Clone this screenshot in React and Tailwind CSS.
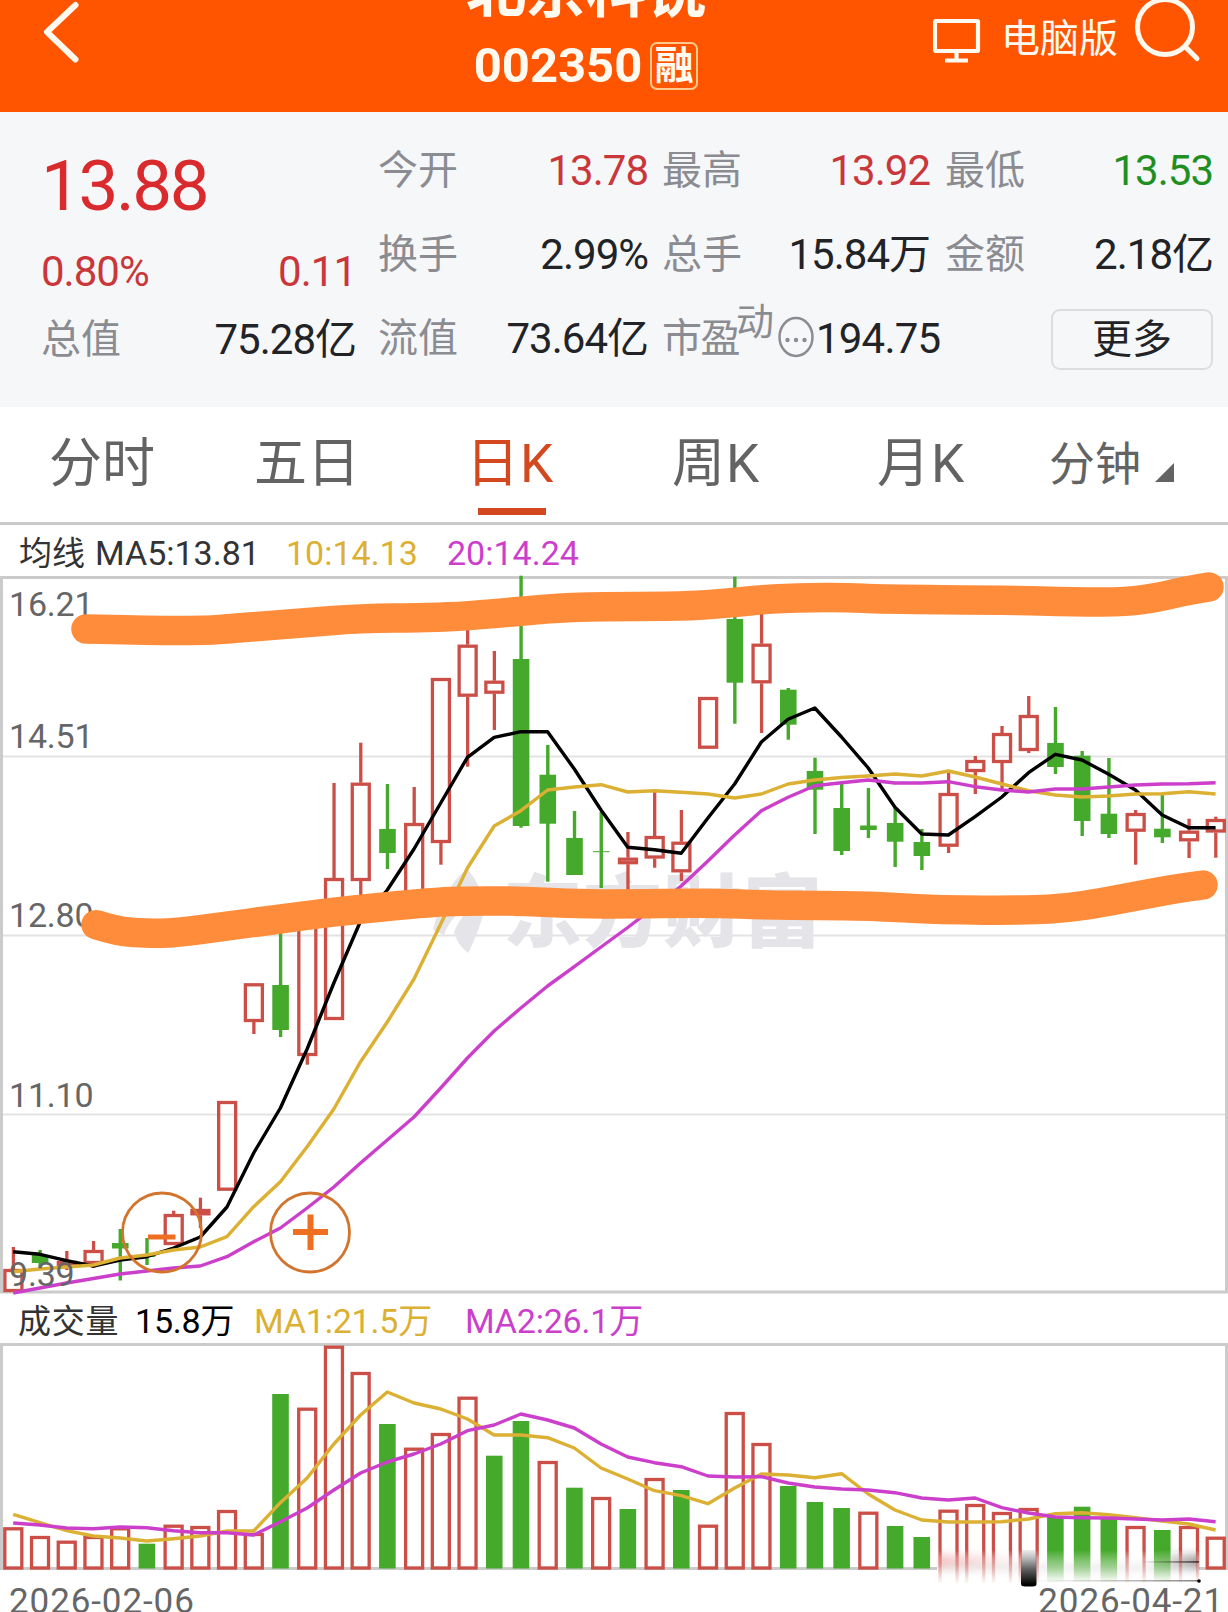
const RED = "#cb4e47";
const GREEN = "#45a92b";
const YELLOW = "#dcb032";
const PURPLE = "#cb3fcb";

const STEP = 26.72;
const xAt = (i) => 13.2 + STEP * i;

// [direction, high, bodyTop, bodyBottom, low]
const candles = [
  ["up", 1247, 1269, 1292, 1292],
  ["down", 1250, 1255, 1263, 1268],
  ["up", 1251, 1261, 1267, 1270],
  ["up", 1241, 1250, 1264, 1268],
  ["down", 1229, 1243, 1248.5, 1280.5],
  ["down", 1238, 1255, 1257, 1265],
  ["up", 1210.7, 1214, 1245, 1245],
  ["up", 1197.7, 1209, 1215.3, 1228],
  ["up", 1101, 1101, 1190.7, 1190.7],
  ["up", 983.3, 983.3, 1022, 1034],
  ["down", 925, 985, 1030, 1037],
  ["up", 918, 918, 1056, 1064.7],
  ["up", 783, 878, 1020, 1020],
  ["up", 742.7, 782.7, 881, 900],
  ["down", 784, 829, 853, 869],
  ["up", 787, 823, 900, 900],
  ["up", 678, 678, 843, 864.7],
  ["up", 620, 644.7, 696.7, 766.7],
  ["up", 651, 680.7, 693.7, 730],
  ["down", 575.7, 659, 826, 827.7],
  ["down", 745, 774.7, 823.7, 881.7],
  ["down", 811, 838, 875, 875],
  ["down", 812, 851.2, 852.2, 888],
  ["up", 832, 857.7, 864.2, 895],
  ["up", 790.7, 836, 858.5, 867.7],
  ["up", 810, 841.7, 872.3, 881],
  ["up", 697, 697, 748.7, 748.7],
  ["down", 576.7, 619, 682.7, 723.7],
  ["up", 605, 643.7, 683.3, 733],
  ["down", 688, 689.7, 724.7, 739.7],
  ["down", 757.7, 771, 789.7, 834],
  ["down", 784, 808, 851, 855],
  ["down", 788, 825.5, 830, 838],
  ["down", 808, 823, 841.7, 867],
  ["down", 829, 842, 856, 870],
  ["up", 772.7, 793, 846.7, 853],
  ["up", 756, 760, 772, 794],
  ["up", 726, 733, 763, 790],
  ["up", 696, 715, 751, 753],
  ["down", 707, 743, 767, 774],
  ["down", 751, 755.7, 821, 836],
  ["down", 758, 813.7, 834, 838],
  ["up", 810, 813, 831.7, 864.7],
  ["down", 795, 828.7, 837.3, 843],
  ["up", 818.7, 830.7, 841.3, 858],
  ["up", 816.7, 819, 832.5, 857.7],
];

const ma5 = [
  1251.7, 1254.3, 1260.7, 1266, 1260, 1256.7, 1248, 1237, 1207, 1153, 1108, 1049,
  983, 921, 890, 849, 803, 757.3, 737.3, 731.7, 731.7, 769, 810, 847.3, 849.7,
  853.3, 818, 784, 742, 719.3, 708, 737, 768, 807.3, 834, 835, 816.7, 797, 772.7,
  754.3, 760, 774.3, 790, 815, 827.7, 827.7,
];

const ma10 = [
  1271.7, 1269, 1267, 1265, 1258, 1255, 1250, 1247, 1236.7, 1206.7, 1181.7,
  1146.7, 1109, 1061.7, 1022, 979, 924, 868, 826, 810.7, 790, 787, 784.7, 792,
  790.7, 792.3, 794, 798, 794, 784, 780, 777.5, 776, 774, 776, 771, 777, 784,
  790.7, 795, 797, 796, 794, 793.7, 791.7, 794,
];

const ma20 = [
  1293, 1288, 1283, 1278.5, 1274, 1271, 1268, 1266, 1256.7, 1241.7, 1228, 1208,
  1187, 1163, 1140, 1117, 1088, 1058, 1031, 1008, 986, 966.7, 947, 927.5, 907,
  886, 861, 835, 810.7, 797.3, 785.7, 782.7, 780, 783, 783, 781.7, 786.7, 790,
  792, 789, 789, 787, 785, 784, 783.7, 782.7,
];

// [direction, top]
const volumes = [
  ["up", 1527.3], ["up", 1536], ["up", 1540.7], ["up", 1536], ["up", 1527.3],
  ["down", 1543.7], ["up", 1524.7], ["up", 1526], ["up", 1510], ["up", 1533],
  ["down", 1394], ["up", 1407.7], ["up", 1345.7], ["up", 1372], ["down", 1424],
  ["up", 1447.7], ["up", 1433], ["up", 1396.7], ["down", 1455.7], ["down", 1421],
  ["up", 1461], ["down", 1487.7], ["up", 1497], ["down", 1509], ["up", 1478],
  ["down", 1490], ["up", 1524.7], ["up", 1412], ["up", 1443], ["down", 1486],
  ["down", 1502], ["down", 1508], ["up", 1511.7], ["down", 1526], ["down", 1537],
  ["up", 1509.7], ["up", 1504], ["up", 1512], ["up", 1508], ["down", 1516],
  ["down", 1506.7], ["down", 1519], ["up", 1526], ["down", 1530], ["up", 1526],
  ["up", 1536.7],
];

const volMa1 = [
  1514.3, 1522.7, 1530.7, 1536, 1538, 1541, 1538.7, 1536, 1531, 1531, 1502.7,
  1478, 1444, 1415, 1392, 1403, 1409, 1419, 1435, 1435, 1437.7, 1448, 1468, 1479,
  1490.7, 1495.7, 1503.7, 1488, 1474, 1475, 1477.7, 1473.7, 1494, 1510, 1520,
  1522, 1522, 1521.7, 1519, 1513.7, 1512.7, 1514.7, 1517.7, 1521, 1524, 1530,
];

const volMa2 = [
  1523, 1525, 1528, 1528.7, 1527, 1527.7, 1530.7, 1532.7, 1532.7, 1535, 1521.7,
  1508, 1490, 1473, 1462, 1454, 1444, 1430.7, 1425, 1414, 1420, 1428, 1444, 1457,
  1462.7, 1466.7, 1476, 1477, 1476.7, 1483, 1487, 1489, 1490, 1492.7, 1498, 1500,
  1498, 1507.7, 1513, 1517, 1517.7, 1518, 1519, 1520, 1519, 1521.7,
];

const axisLabels = [
  ["16.21", 616],
  ["14.51", 747.7],
  ["12.80", 927],
  ["11.10", 1107],
  ["9.39", 1286],
];

const upperBand = [
  [86, 629], [145, 630.5], [204, 630.3], [228, 629], [300, 623], [360, 618.5],
  [430, 617.7], [467, 616], [521, 611.3], [570, 607], [640, 606.5], [692, 606],
  [735, 602.5], [778, 598], [845, 597.3], [880, 599.3], [1005, 600],
  [1076, 602], [1127, 602], [1160, 597], [1185, 591], [1209, 587],
];

const lowerBand = [
  [96, 924.7], [113, 930], [133, 932.7], [157, 933.5], [180, 932.3], [213, 928],
  [280, 919], [333, 912], [400, 905.3], [437, 902], [467, 900.8], [520, 901],
  [567, 903.7], [613, 904], [713, 903], [767, 905], [820, 905.7], [867, 905.7],
  [940, 910], [1030, 910.3], [1067, 908], [1100, 903], [1147, 894],
  [1177, 888.5], [1203, 885],
];

const toPoints = (values) => values.map((y, i) => `${xAt(i)},${y}`).join(" ");

// quadratic smoothing through the midpoints
const toCurve = (pts) => {
  let d = `M${pts[0][0]} ${pts[0][1]}`;
  for (let i = 1; i < pts.length - 1; i++) {
    const mx = (pts[i][0] + pts[i + 1][0]) / 2;
    const my = (pts[i][1] + pts[i + 1][1]) / 2;
    d += ` Q${pts[i][0]} ${pts[i][1]} ${mx} ${my}`;
  }
  const last = pts[pts.length - 1];
  return `${d} L${last[0]} ${last[1]}`;
};

function Line({ values, color, width = 3.4 }) {
  return (
    <polyline
      points={toPoints(values)}
      fill="none"
      stroke={color}
      strokeWidth={width}
      strokeLinejoin="round"
    />
  );
}

function Candle({ index, data }) {
  const [dir, high, top, bottom, low] = data;
  const x = xAt(index) + 0.2;

  if (dir === "down") {
    return (
      <g fill={GREEN}>
        <rect x={x - 1.7} y={high} width={3.4} height={low - high} />
        <rect x={x - 8.3} y={top} width={16.6} height={bottom - top} />
      </g>
    );
  }

  return (
    <g stroke={RED} strokeWidth={3.3} fill="none">
      {high < top && <line x1={x} x2={x} y1={high} y2={top} />}
      {low > bottom && <line x1={x} x2={x} y1={bottom} y2={low} />}
      <rect x={x - 8.5} y={top + 1.5} width={17} height={bottom - top - 3} />
    </g>
  );
}

function VolumeBar({ index, data }) {
  const [dir, top] = data;
  const x = xAt(index) + 0.1;
  if (dir === "down") {
    return <rect x={x - 8.3} y={top} width={16.6} height={1568.5 - top} fill={GREEN} />;
  }
  return (
    <rect
      x={x - 8.5}
      y={top + 1.5}
      width={17}
      height={1566.5 - top}
      fill="none"
      stroke={RED}
      strokeWidth={3.3}
    />
  );
}

function Stat({ label, value, color = "text-[#222326]" }) {
  return (
    <div className="flex h-[84px] justify-between leading-[84px]">
      <span className="text-[#8b8c91]">{label}</span>
      <span className={`text-[42px] tracking-[-1px] ${color}`}>{value}</span>
    </div>
  );
}

function Header() {
  return (
    <header className="flex h-[112px] overflow-hidden bg-[#ff5500] text-[#fffaf0]">
      <div className="w-[466px]">
        <svg width="90" height="70" fill="none" stroke="currentColor" strokeWidth="6" strokeLinecap="round" strokeLinejoin="round">
          <path d="M75.5 5 L47 32 L75.5 59.5" />
        </svg>
      </div>

      <div className="-mt-[38px] flex w-[240px] flex-col items-center font-bold">
        <div className="h-[60px] whitespace-nowrap text-[60px] leading-[60px]">北京科锐</div>
        <div className="mt-[20px] flex h-[48px] items-center gap-[8px] text-[49px] leading-[48px]">
          <span>002350</span>
          <span className="flex h-[48px] w-[48px] items-center justify-center rounded-[7px] border-2 border-[#ffc88c] text-[39px] leading-[44px]">
            融
          </span>
        </div>
      </div>

      <div className="ml-auto flex w-[295px]">
        <svg className="shrink-0" width="68" height="70" viewBox="0 0 68 70" fill="none" stroke="currentColor" strokeWidth="4.200">
          <rect x="2" y="21" width="43" height="30" rx="1" />
          <path d="M23.500 51v9M12 60.500h23" />
        </svg>
        <span className="w-[124px] shrink-0 text-[39px] leading-[79px]">电脑版</span>
        <svg className="shrink-0" width="80" height="70" viewBox="0 0 80 70" fill="none" stroke="currentColor" strokeWidth="5" strokeLinecap="round">
          <circle cx="40" cy="27" r="27.500" />
          <path d="M60 46.500 L72 58.500" />
        </svg>
      </div>
    </header>
  );
}

function Quote() {
  return (
    <section className="flex h-[295px] bg-[#f6f7f9] pl-[41px] pt-[17px] text-[40px]">
      <div className="w-[315px]">
        <div className="h-[115px] text-[71px] leading-[114px] tracking-[-2.4px] text-[#d92b2e]">13.88</div>
        <div className="flex h-[54px] justify-between text-[42px] leading-[55px] tracking-[-1px] text-[#c9373b]">
          <span>0.80%</span>
          <span>0.11</span>
        </div>
        <Stat label="总值" value="75.28亿" />
      </div>

      <div className="ml-[22px] w-[270px]">
        <Stat label="今开" value="13.78" color="text-[#c9373b]" />
        <Stat label="换手" value="2.99%" />
        <Stat label="流值" value="73.64亿" />
      </div>

      <div className="ml-[14px] w-[268px]">
        <Stat label="最高" value="13.92" color="text-[#c9373b]" />
        <Stat label="总手" value="15.84万" />
        <div className="flex h-[84px] w-[300px] leading-[84px]">
          <span className="w-[74px] whitespace-nowrap tracking-[-1.500px] text-[#8b8c91]">市盈</span>
          <span className="h-[50px] leading-[50px] text-[38px] text-[#8b8c91]">动</span>
          <svg className="ml-[2px] shrink-0" width="40" height="84" viewBox="0 0 40 84" fill="none" stroke="#8b8c91" strokeWidth="2.500">
            <ellipse cx="20" cy="40" rx="16.500" ry="19" />
            <g fill="#8b8c91" stroke="none">
              <circle cx="11.500" cy="43" r="2.200" />
              <circle cx="20" cy="43" r="2.200" />
              <circle cx="28.500" cy="43" r="2.200" />
            </g>
          </svg>
          <span className="text-[42px] tracking-[-0.8px] text-[#222326]">194.75</span>
        </div>
      </div>

      <div className="ml-[15px] w-[268px]">
        <Stat label="最低" value="13.53" color="text-[#1f8f22]" />
        <Stat label="金额" value="2.18亿" />
        <div className="flex h-[85px] items-center justify-end">
          <button className="h-[61px] w-[162px] rounded-[9px] border-2 border-[#dcdde1] text-[40px] leading-[58px] text-[#222326]">
            更多
          </button>
        </div>
      </div>
    </section>
  );
}

function Tabs() {
  return (
    <nav className="grid h-[118px] grid-cols-[205px_212px_206px_205px_172px_1fr] border-b-[3px] border-[#c9c9c9] bg-white pl-[49px] text-[53px] leading-[115px] text-[#636363]">
      <span>分时</span>
      <span>五日</span>
      <span className="flex flex-col text-[#d3481f]">
        <span className="h-[101px] tracking-[1px]">日K</span>
        <span className="ml-[12px] h-[7px] w-[68px] bg-[#d3481f]" />
      </span>
      <span className="tracking-[1px]">周K</span>
      <span className="tracking-[1px]">月K</span>
      <span className="flex text-[46px]">
        分钟
        <svg className="ml-[14px]" width="20" height="80" viewBox="0 0 20 80">
          <path d="M0 75 L19 56 V75Z" fill="#636363" />
        </svg>
      </span>
    </nav>
  );
}

function PriceChart() {
  return (
    <svg className="relative block overflow-visible" width="1228" height="718" viewBox="0 576 1228 718">
      <g stroke="#e3e3e3" strokeWidth="2">
        <path d="M3 756.500H1226M3 935.500H1226M3 1114.500H1226" />
      </g>
      <g stroke="#cbcbcb" strokeWidth="3">
        <path d="M0 577.500H1228M1.500 577V1292M1226.500 577V1292M0 1292H1228" />
      </g>

      {/* watermark */}
      <g fill="#e4e4e9">
        <path d="M433 930 C440 902 452 880 467 869 C478 880 484 897 484 912 C480 926 474 942 468 953 C460 946 456 940 454 932 C458 922 466 912 472 904 C460 910 449 920 444 935 Z" />
        <text x="503" y="941" fontSize="79" fontWeight="900" textLength="319">东方财富</text>
      </g>

      {candles.map((c, i) => (
        <Candle key={i} index={i} data={c} />
      ))}

      <Line values={ma5} color="#000" />
      <Line values={ma10} color={YELLOW} />
      <Line values={ma20} color={PURPLE} />

      <g fill="#666" fontSize="34" letterSpacing="-0.200">
        {axisLabels.map(([text, y]) => (
          <text key={text} x="9" y={y}>{text}</text>
        ))}
      </g>

      {/* zoom buttons */}
      <g fill="none" stroke="#d2742c" strokeWidth="2.800">
        <circle cx="162" cy="1232.500" r="39.500" />
        <circle cx="310" cy="1232.500" r="39.500" />
      </g>
      <g stroke="#ee6f22">
        <path d="M148 1237H175.500" strokeWidth="5" />
        <path d="M293 1232H328M310.500 1214.500V1250" strokeWidth="6" />
      </g>

      {/* channel drawn by hand */}
      <g fill="none" stroke="#ff8c3a" strokeWidth="29.500" strokeLinecap="round" strokeLinejoin="round">
        <path d={toCurve(upperBand)} />
        <path d={toCurve(lowerBand)} />
      </g>
    </svg>
  );
}

function FadedBar({ index, data }) {
  const x = xAt(index) + 0.1;
  if (data[0] === "down") {
    return <rect x={x - 8.3} y="1550" width="16.600" height="33" fill="url(#fadeGreen)" />;
  }
  return (
    <g fill="url(#fadeRed)">
      <rect x={x - 10.1} y="1550" width="3.300" height="33" />
      <rect x={x + 6.9} y="1550" width="3.300" height="33" />
    </g>
  );
}

function VolumeChart() {
  return (
    <svg className="block" width="1228" height="245" viewBox="0 1343 1228 245">
      <defs>
        <linearGradient id="fadeGreen" x1="0" x2="0" y1="0" y2="1">
          <stop offset="0" stopColor={GREEN} />
          <stop offset="1" stopColor={GREEN} stopOpacity="0" />
        </linearGradient>
        <linearGradient id="fadeRed" x1="0" x2="0" y1="0" y2="1">
          <stop offset="0" stopColor={RED} />
          <stop offset="0.250" stopColor={RED} stopOpacity="0.600" />
          <stop offset="1" stopColor={RED} stopOpacity="0.050" />
        </linearGradient>
        <linearGradient id="pink" x1="0" x2="1" y1="0" y2="0">
          <stop offset="0" stopColor="#e77" stopOpacity="0.450" />
          <stop offset="1" stopColor="#e88" stopOpacity="0" />
        </linearGradient>
        <linearGradient id="smudge" x1="0" x2="1" y1="0" y2="0">
          <stop offset="0" stopColor="#554040" stopOpacity="0" />
          <stop offset="1" stopColor="#302424" stopOpacity="0.800" />
        </linearGradient>
        <linearGradient id="blob" x1="0" x2="0" y1="0" y2="1">
          <stop offset="0" stopColor="#999" stopOpacity="0.200" />
          <stop offset="0.500" stopColor="#666" />
          <stop offset="0.950" stopColor="#000" />
        </linearGradient>
        <filter id="soft" x="-20%" y="-50%" width="140%" height="200%">
          <feGaussianBlur stdDeviation="1 4" />
        </filter>
      </defs>

      <g stroke="#cbcbcb" strokeWidth="3">
        <path d="M0 1344.500H1228M1.500 1344V1569M1226.500 1344V1569M0 1568.500H1228" />
      </g>

      {volumes.map((v, i) => (
        <VolumeBar key={i} index={i} data={v} />
      ))}

      <Line values={volMa1} color={YELLOW} />
      <Line values={volMa2} color={PURPLE} />

      {/* smeared corner */}
      <rect x="937" y="1550" width="262" height="37" fill="#fff" />
      <g filter="url(#soft)">
        <rect x="938" y="1555" width="84" height="13" fill="url(#pink)" />
        <rect x="938" y="1565" width="261" height="5" fill="#bbb" opacity="0.400" />
        <rect x="1150" y="1555" width="48" height="13" fill="url(#smudge)" opacity="0.600" />
      </g>
      {volumes.map((v, i) =>
        i >= 35 && i <= 44 ? <FadedBar key={i} index={i} data={v} /> : null
      )}
      <path d="M1021 1550h15.500v34q0 2.500 -4 2.500h-7.500q-4 0 -4 -2.500z" fill="url(#blob)" />
      <rect x="1140" y="1561" width="59" height="1.800" fill="url(#smudge)" />
      <rect x="1030" y="1580" width="168" height="1.500" fill="url(#smudge)" opacity="0.700" />
      <circle cx="1199" cy="1581" r="1.800" fill="#000" />
    </svg>
  );
}

function App() {
  return (
    <div className="h-[1612px] w-[1228px] overflow-hidden bg-white font-['Roboto','Noto_Sans_CJK_SC',sans-serif]">
      <Header />
      <Quote />
      <Tabs />

      <div className="flex h-[51px] whitespace-pre pl-[19px] text-[34px] leading-[57px]">
        <span className="w-[76px] text-[33px] text-[#333]">均线</span>
        <span className="w-[191px] text-[#333]">MA5:13.81</span>
        <span className="w-[161px] text-[#dcb032]">10:14.13</span>
        <span className="text-[#cb3fcb]">20:14.24</span>
      </div>
      <PriceChart />

      <div className="flex h-[49px] whitespace-pre pl-[18px] text-[34px] leading-[55px] tracking-[-0.2px]">
        <span className="w-[117px] text-[33px] tracking-[0.7px] text-[#333]">成交量</span>
        <span className="w-[119px] text-black">15.8万</span>
        <span className="w-[211px] text-[#dcb032]">MA1:21.5万</span>
        <span className="text-[#cb3fcb]">MA2:26.1万</span>
      </div>
      <VolumeChart />

      <div className="flex h-[24px] justify-between pl-[9px] pr-[4px] text-[35px] leading-[27px] tracking-[0.9px] text-[#666]">
        <span>2026-02-06</span>
        <span>2026-04-21</span>
      </div>
    </div>
  );
}

export default App;
